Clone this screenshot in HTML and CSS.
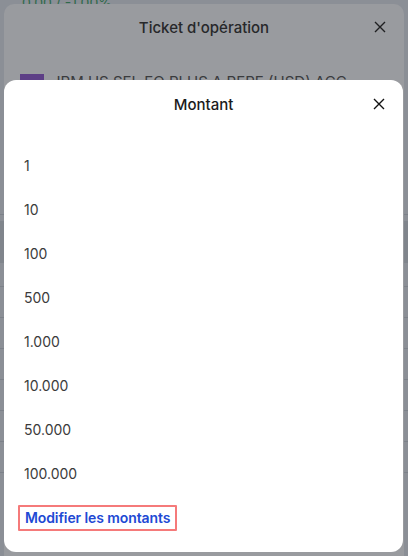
FILE: index.html
```html
<!DOCTYPE html>
<html lang="fr">
<head>
<meta charset="utf-8">
<link rel="stylesheet" href="styles.css">
<title>Montant</title>
</head>
<body>
<div class="page">
  <div class="quote">0.00 / -1.00%</div>
  <div class="chart">
    <div class="gline"></div>
    <div class="band"></div>
    <div class="gline"></div>
    <div class="gline"></div>
    <div class="gline"></div>
    <div class="gline"></div>
    <div class="gline"></div>
    <div class="gline"></div>
    <div class="gline"></div>
  </div>
</div>

<div class="ticket">
  <div class="ticket-head">
    <span class="ticket-title">Ticket d'opération</span>
    <svg class="close dim" viewBox="0 0 12 12" width="12" height="12"><path d="M1 1 L11 11 M11 1 L1 11" stroke="currentColor" stroke-width="1.4" fill="none"/></svg>
  </div>
  <div class="fund">
    <span class="swatch"></span>
    <span class="fund-name">JPM US SEL EQ PLUS A PERE (USD) ACC</span>
  </div>
</div>

<div class="sheet">
  <div class="sheet-head">
    <span class="sheet-title">Montant</span>
    <svg class="close" viewBox="0 0 12 12" width="12" height="12"><path d="M1 1 L11 11 M11 1 L1 11" stroke="currentColor" stroke-width="1.4" fill="none"/></svg>
  </div>
  <ul class="amounts">
    <li>1</li>
    <li>10</li>
    <li>100</li>
    <li>500</li>
    <li>1.000</li>
    <li>10.000</li>
    <li>50.000</li>
    <li>100.000</li>
  </ul>
  <div class="edit-row">
    <a class="edit" href="#">Modifier les montants</a>
  </div>
</div>
</body>
</html>
```

FILE: styles.css
```css
* { box-sizing: border-box; }
html, body { margin: 0; padding: 0; }
body {
  width: 408px;
  height: 556px;
  overflow: hidden;
  background: #8b8f96;
  font-family: Inter, "Noto Sans", sans-serif;
  position: relative;
}
.page {
  height: 556px;
  display: flex;
  flex-direction: column;
}
.quote {
  padding: 0 0 0 22px;
  color: #2f6a4a;
  font-size: 14px;
  line-height: 14px;
  height: 20px;
  margin-top: -4px;
}
.chart {
  display: flex;
  flex-direction: column;
  margin-top: 198px;
}
.gline {
  height: 1px;
  background: #7c8189;
  margin-bottom: 30px;
}
.band {
  height: 42px;
  background: #80858c;
  margin: -24px 0 23px;
}

.ticket {
  position: absolute;
  left: 4px;
  right: 4px;
  top: 4px;
  bottom: 0;
  background: #999b9f;
  border-radius: 10px 10px 0 0;
}
.ticket-head {
  height: 46px;
  display: flex;
  align-items: center;
  justify-content: center;
  position: relative;
}
.ticket-title {
  font-size: 15px;
  font-weight: 500;
  color: #27282a;
}
.close {
  position: absolute;
  right: 18px;
  top: 50%;
  margin-top: -6px;
  color: #111;
}
.close.dim { color: #1f2022; }
.fund {
  display: flex;
  align-items: flex-start;
  gap: 8px;
  padding: 23px 0 0 16px;
}
.swatch {
  width: 24px;
  height: 16px;
  background: #5d3f86;
  margin-top: 1px;
}
.fund-name {
  font-size: 15px;
  color: #3a3b3e;
  line-height: 18px;
}

.sheet {
  position: absolute;
  left: 4px;
  width: 399px;
  top: 80px;
  height: 472px;
  background: #ffffff;
  border-radius: 12px;
  display: flex;
  flex-direction: column;
}
.sheet-head {
  height: 48px;
  display: flex;
  align-items: center;
  justify-content: center;
  position: relative;
}
.sheet-title {
  font-size: 15px;
  font-weight: 500;
  color: #1b1b1b;
}
.amounts {
  list-style: none;
  margin: 0;
  padding: 15px 0 0 0;
}
.amounts li {
  height: 44px;
  display: flex;
  align-items: center;
  padding-left: 20px;
  font-size: 14px;
  color: #3b3b3b;
}
.edit-row {
  padding: 10px 0 0 14px;
}
.edit {
  display: inline-block;
  padding: 2px 5px 2px 5px;
  border: 2px solid #f57a7a;
  border-radius: 1px;
  color: #2149d4;
  font-size: 14px;
  font-weight: 600;
  line-height: 18px;
  letter-spacing: -0.1px;
  text-decoration: none;
}
```
